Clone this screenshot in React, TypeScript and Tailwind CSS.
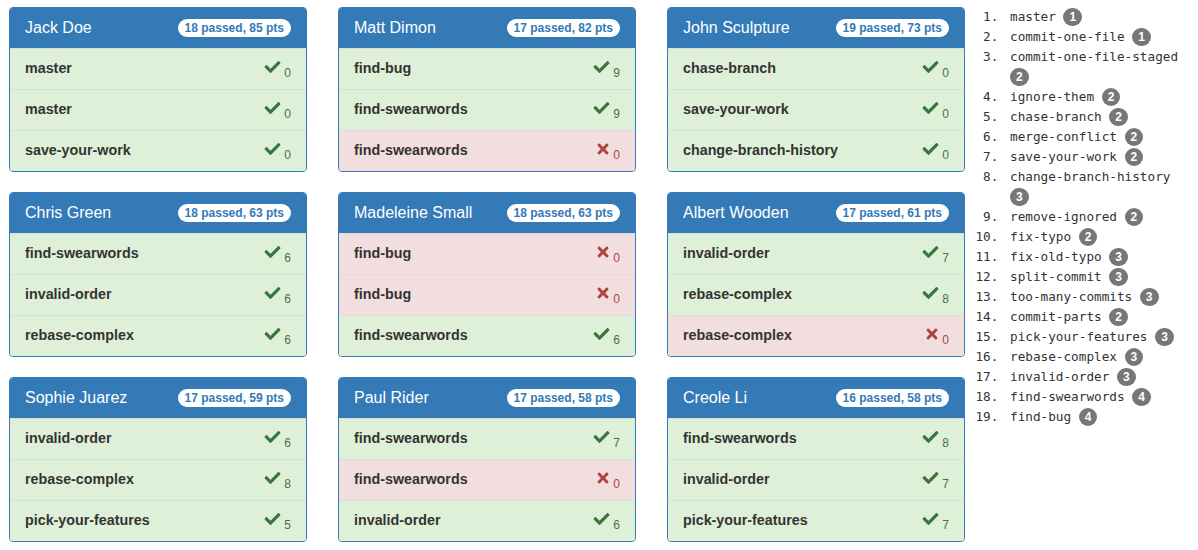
import { FaCheck, FaTimes } from "react-icons/fa";

type Result = { level: string; ok: boolean; score: number };
type Player = { name: string; passed: number; pts: number; results: Result[] };

const players: Player[] = [
  { name: "Jack Doe", passed: 18, pts: 85, results: [
    { level: "master", ok: true, score: 0 },
    { level: "master", ok: true, score: 0 },
    { level: "save-your-work", ok: true, score: 0 },
  ] },
  { name: "Matt Dimon", passed: 17, pts: 82, results: [
    { level: "find-bug", ok: true, score: 9 },
    { level: "find-swearwords", ok: true, score: 9 },
    { level: "find-swearwords", ok: false, score: 0 },
  ] },
  { name: "John Sculpture", passed: 19, pts: 73, results: [
    { level: "chase-branch", ok: true, score: 0 },
    { level: "save-your-work", ok: true, score: 0 },
    { level: "change-branch-history", ok: true, score: 0 },
  ] },
  { name: "Chris Green", passed: 18, pts: 63, results: [
    { level: "find-swearwords", ok: true, score: 6 },
    { level: "invalid-order", ok: true, score: 6 },
    { level: "rebase-complex", ok: true, score: 6 },
  ] },
  { name: "Madeleine Small", passed: 18, pts: 63, results: [
    { level: "find-bug", ok: false, score: 0 },
    { level: "find-bug", ok: false, score: 0 },
    { level: "find-swearwords", ok: true, score: 6 },
  ] },
  { name: "Albert Wooden", passed: 17, pts: 61, results: [
    { level: "invalid-order", ok: true, score: 7 },
    { level: "rebase-complex", ok: true, score: 8 },
    { level: "rebase-complex", ok: false, score: 0 },
  ] },
  { name: "Sophie Juarez", passed: 17, pts: 59, results: [
    { level: "invalid-order", ok: true, score: 6 },
    { level: "rebase-complex", ok: true, score: 8 },
    { level: "pick-your-features", ok: true, score: 5 },
  ] },
  { name: "Paul Rider", passed: 17, pts: 58, results: [
    { level: "find-swearwords", ok: true, score: 7 },
    { level: "find-swearwords", ok: false, score: 0 },
    { level: "invalid-order", ok: true, score: 6 },
  ] },
  { name: "Creole Li", passed: 16, pts: 58, results: [
    { level: "find-swearwords", ok: true, score: 8 },
    { level: "invalid-order", ok: true, score: 7 },
    { level: "pick-your-features", ok: true, score: 7 },
  ] },
];

const levels: Array<[string, number]> = [
  ["master", 1],
  ["commit-one-file", 1],
  ["commit-one-file-staged", 2],
  ["ignore-them", 2],
  ["chase-branch", 2],
  ["merge-conflict", 2],
  ["save-your-work", 2],
  ["change-branch-history", 3],
  ["remove-ignored", 2],
  ["fix-typo", 2],
  ["fix-old-typo", 3],
  ["split-commit", 3],
  ["too-many-commits", 3],
  ["commit-parts", 2],
  ["pick-your-features", 3],
  ["rebase-complex", 3],
  ["invalid-order", 3],
  ["find-swearwords", 4],
  ["find-bug", 4],
];

function PlayerPanel({ player }: { player: Player }) {
  return (
    <div className="overflow-hidden rounded-[4px] border border-[#337ab7] bg-white">
      <div className="flex h-[40px] items-center justify-between bg-[#337ab7] px-[15px] text-white">
        <h3 className="text-[16px] leading-none">{player.name}</h3>
        <span className="rounded-[10px] bg-white px-[7px] py-[3px] text-[12px] font-bold leading-none text-[#337ab7]">
          {player.passed} passed, {player.pts} pts
        </span>
      </div>
      {player.results.map((r, i) => (
        <div
          key={i}
          className={
            "flex h-[41px] items-center justify-between border-t border-[#dddddd] px-[15px] " +
            (r.ok ? "bg-[#dff0d8]" : "bg-[#f2dede]")
          }
        >
          <span className="text-[14.3px] font-bold text-[#333333]">{r.level}</span>
          <span className={"flex items-end gap-[3px] " + (r.ok ? "text-[#3c763d]" : "text-[#a94442]")}>
            {r.ok ? <FaCheck className="mb-[4px] h-[16px] w-[17px]" /> : <FaTimes className="mb-[4px] h-[16px] w-[14px]" />}
            <span className="text-[12px] leading-none">{r.score}</span>
          </span>
        </div>
      ))}
    </div>
  );
}

export default function App() {
  return (
    <div className="flex bg-white pt-[7px] font-['Liberation_Sans',Arial,sans-serif] text-[#333333]">
      <div className="grid shrink-0 grid-cols-[298px_298px_298px] gap-x-[31px] gap-y-[20px] pl-[9px]">
        {players.map((p) => (
          <PlayerPanel key={p.name} player={p} />
        ))}
      </div>
      <div className="min-w-0 flex-1 pl-[41px] pr-[15px]">
        <ol className="list-decimal font-['DejaVu_Sans_Mono',monospace] text-[12.7px] leading-[20px] text-[#333333]">
          {levels.map(([name, diff]) => (
            <li key={name} className="pl-[4px]">
              {name}{" "}
              <span className="inline-block min-w-[18px] rounded-[10px] bg-[#777777] px-[6px] py-[3px] text-center font-['Liberation_Sans',Arial,sans-serif] text-[12px] font-bold leading-none text-white">
                {diff}
              </span>
            </li>
          ))}
        </ol>
      </div>
    </div>
  );
}
